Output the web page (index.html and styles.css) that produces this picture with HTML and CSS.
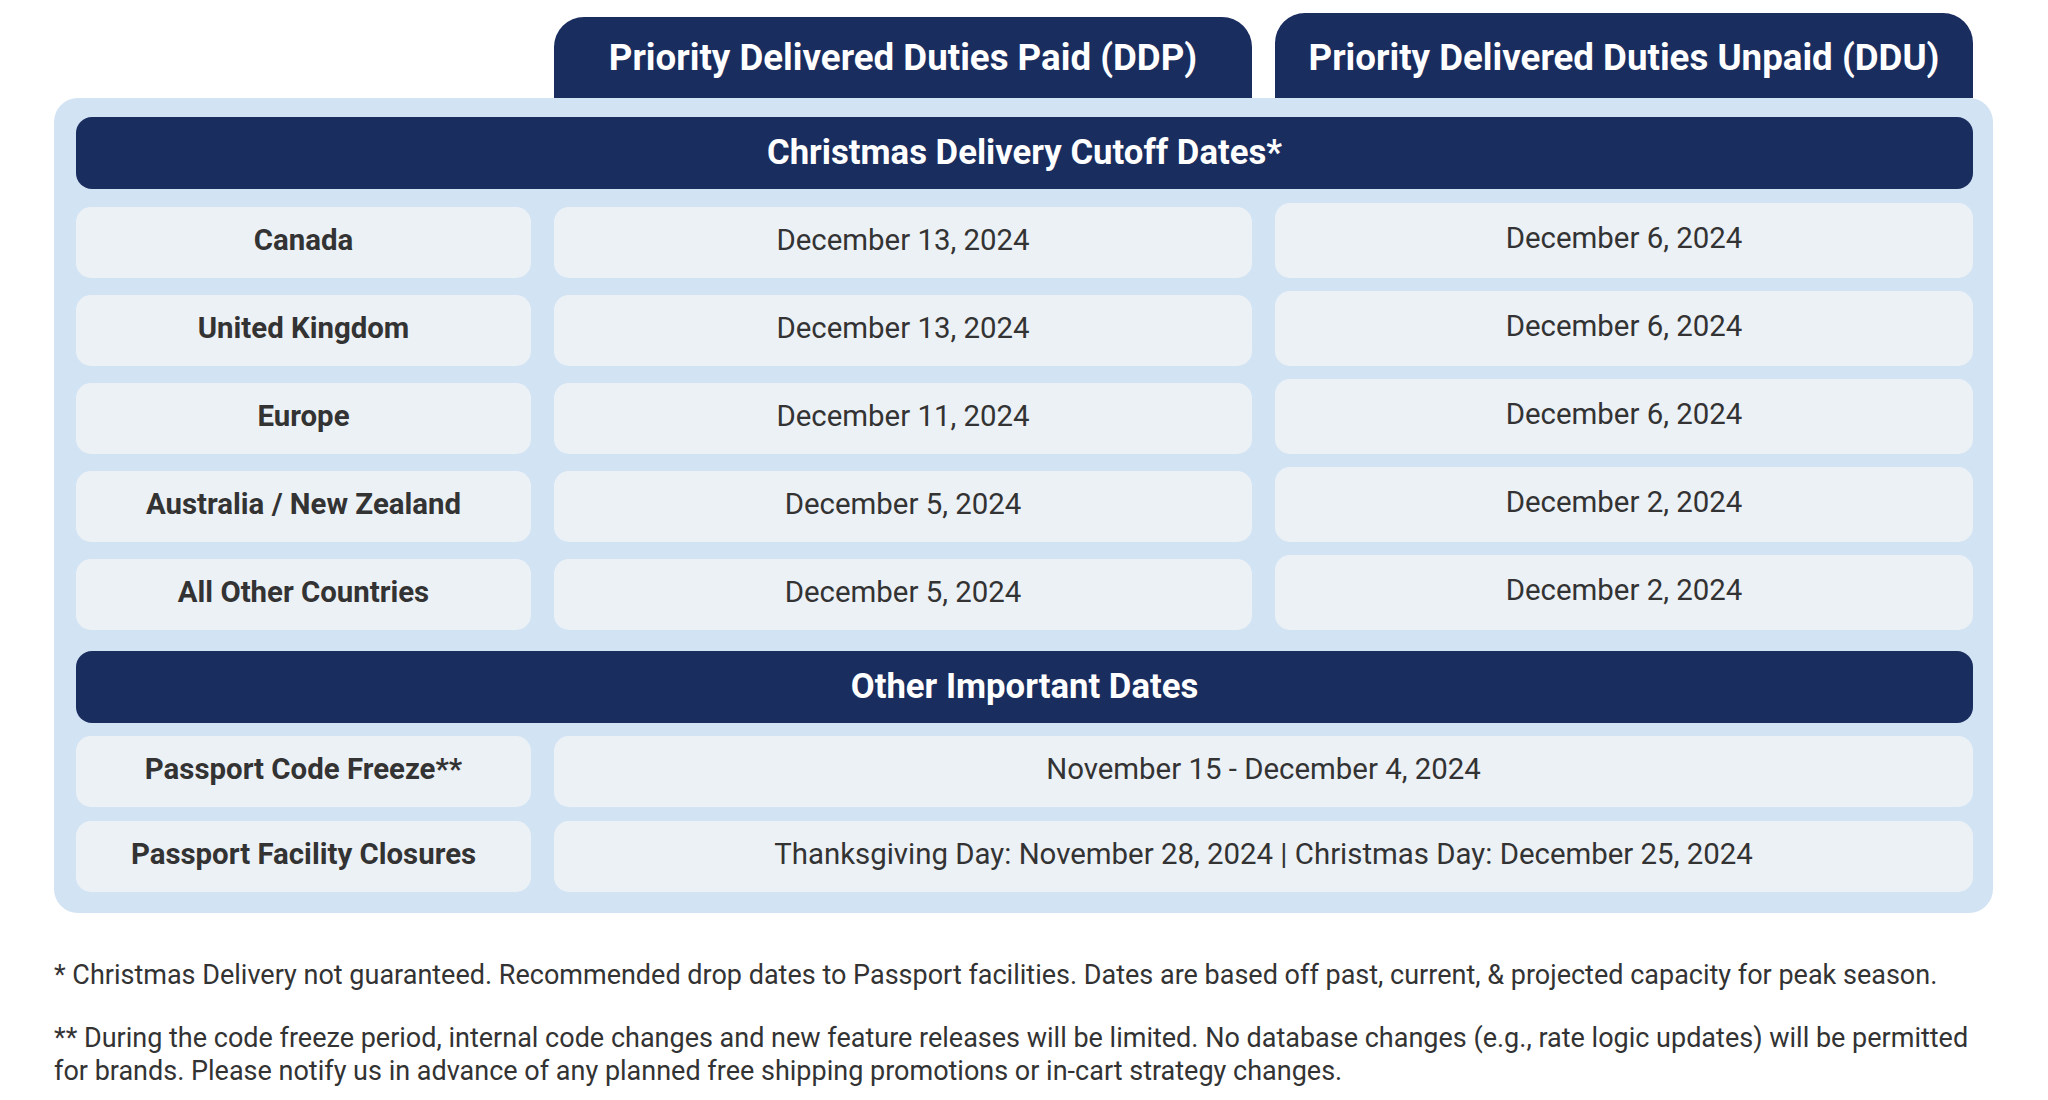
FILE: index.html
```html
<!DOCTYPE html>
<html lang="en">
<head>
    <meta charset="UTF-8">
    <meta name="viewport" content="width=device-width, initial-scale=1.0">
    <title>Holiday Cutoff Dates</title>
    <link rel="stylesheet" href="styles.css">
</head>
<body>
    <div class="tabs">
        <div class="tab tab-ddp">Priority Delivered Duties Paid (DDP)</div>
        <div class="tab tab-ddu">Priority Delivered Duties Unpaid (DDU)</div>
    </div>

    <div class="panel">
        <div class="band">Christmas Delivery Cutoff Dates*</div>
        <div class="rows">
            <div class="cell label">Canada</div>
            <div class="cell">December 13, 2024</div>
            <div class="cell ddu">December 6, 2024</div>

            <div class="cell label">United Kingdom</div>
            <div class="cell">December 13, 2024</div>
            <div class="cell ddu">December 6, 2024</div>

            <div class="cell label">Europe</div>
            <div class="cell">December 11, 2024</div>
            <div class="cell ddu">December 6, 2024</div>

            <div class="cell label">Australia / New Zealand</div>
            <div class="cell">December 5, 2024</div>
            <div class="cell ddu">December 2, 2024</div>

            <div class="cell label">All Other Countries</div>
            <div class="cell">December 5, 2024</div>
            <div class="cell ddu">December 2, 2024</div>
        </div>

        <div class="band band-other">Other Important Dates</div>
        <div class="rows rows-other">
            <div class="cell label">Passport Code Freeze**</div>
            <div class="cell wide">November 15 - December 4, 2024</div>

            <div class="cell label">Passport Facility Closures</div>
            <div class="cell wide">Thanksgiving Day: November 28, 2024 | Christmas Day: December 25, 2024</div>
        </div>
    </div>

    <div class="notes">
        <p>* Christmas Delivery not guaranteed. Recommended drop dates to Passport facilities. Dates are based off past, current, &amp; projected capacity for peak season.</p>
        <p>** During the code freeze period, internal code changes and new feature releases will be limited. No database changes (e.g., rate logic updates) will be permitted for brands. Please notify us in advance of any planned free shipping promotions or in-cart strategy changes.</p>
    </div>
</body>
</html>
```

FILE: styles.css
```css
body {
    margin: 0;
    font-family: Roboto, "Liberation Sans", sans-serif;
    color: #333;
    background: #fff;
}
.tabs {
    display: grid;
    grid-template-columns: 455px 698px 698px;
    column-gap: 23px;
    align-items: end;
    margin: 13px 0 0 54px;
    padding: 0 20px 0 22px;
    width: 1897px;
}
.tab {
    background-color: #1a2d5f;
    color: #fff;
    font-size: 36.7px;
    font-weight: 700;
    text-align: center;
    border-radius: 30px 30px 0 0;
    padding-top: 19px;
    box-sizing: border-box;
}
.tab-ddp {
    grid-column: 2;
    height: 81px;
}
.tab-ddu {
    grid-column: 3;
    height: 85px;
    padding-top: 23px;
}
.panel {
    margin-left: 54px;
    width: 1897px;
    padding: 19px 20px 21px 22px;
    background-color: #d2e3f4;
    border-radius: 24px;
}
.band {
    height: 72px;
    background-color: #1a2d5f;
    color: #fff;
    border-radius: 16px;
    font-size: 34.7px;
    font-weight: 700;
    display: flex;
    align-items: center;
    justify-content: center;
    box-sizing: border-box;
    padding-bottom: 2px;
}
.band-other {
    margin-top: 21px;
}
.rows {
    display: grid;
    grid-template-columns: 455px 698px 698px;
    grid-auto-rows: 71px;
    column-gap: 23px;
    row-gap: 17px;
    margin-top: 18px;
}
.rows-other {
    margin-top: 13px;
    row-gap: 14px;
}
.cell {
    background-color: #ecf1f6;
    border-radius: 15px;
    display: flex;
    align-items: center;
    justify-content: center;
    font-size: 29.4px;
    padding-bottom: 5px;
}
.label {
    font-weight: 700;
}
.ddu {
    margin-top: -4px;
    padding-bottom: 6px;
}
.wide {
    grid-column: 2 / 4;
}
.notes {
    margin: 46px 0 0 54px;
    width: 1939px;
    font-size: 27px;
    line-height: 33px;
}
.notes p {
    margin: 0 0 30px;
}
```
